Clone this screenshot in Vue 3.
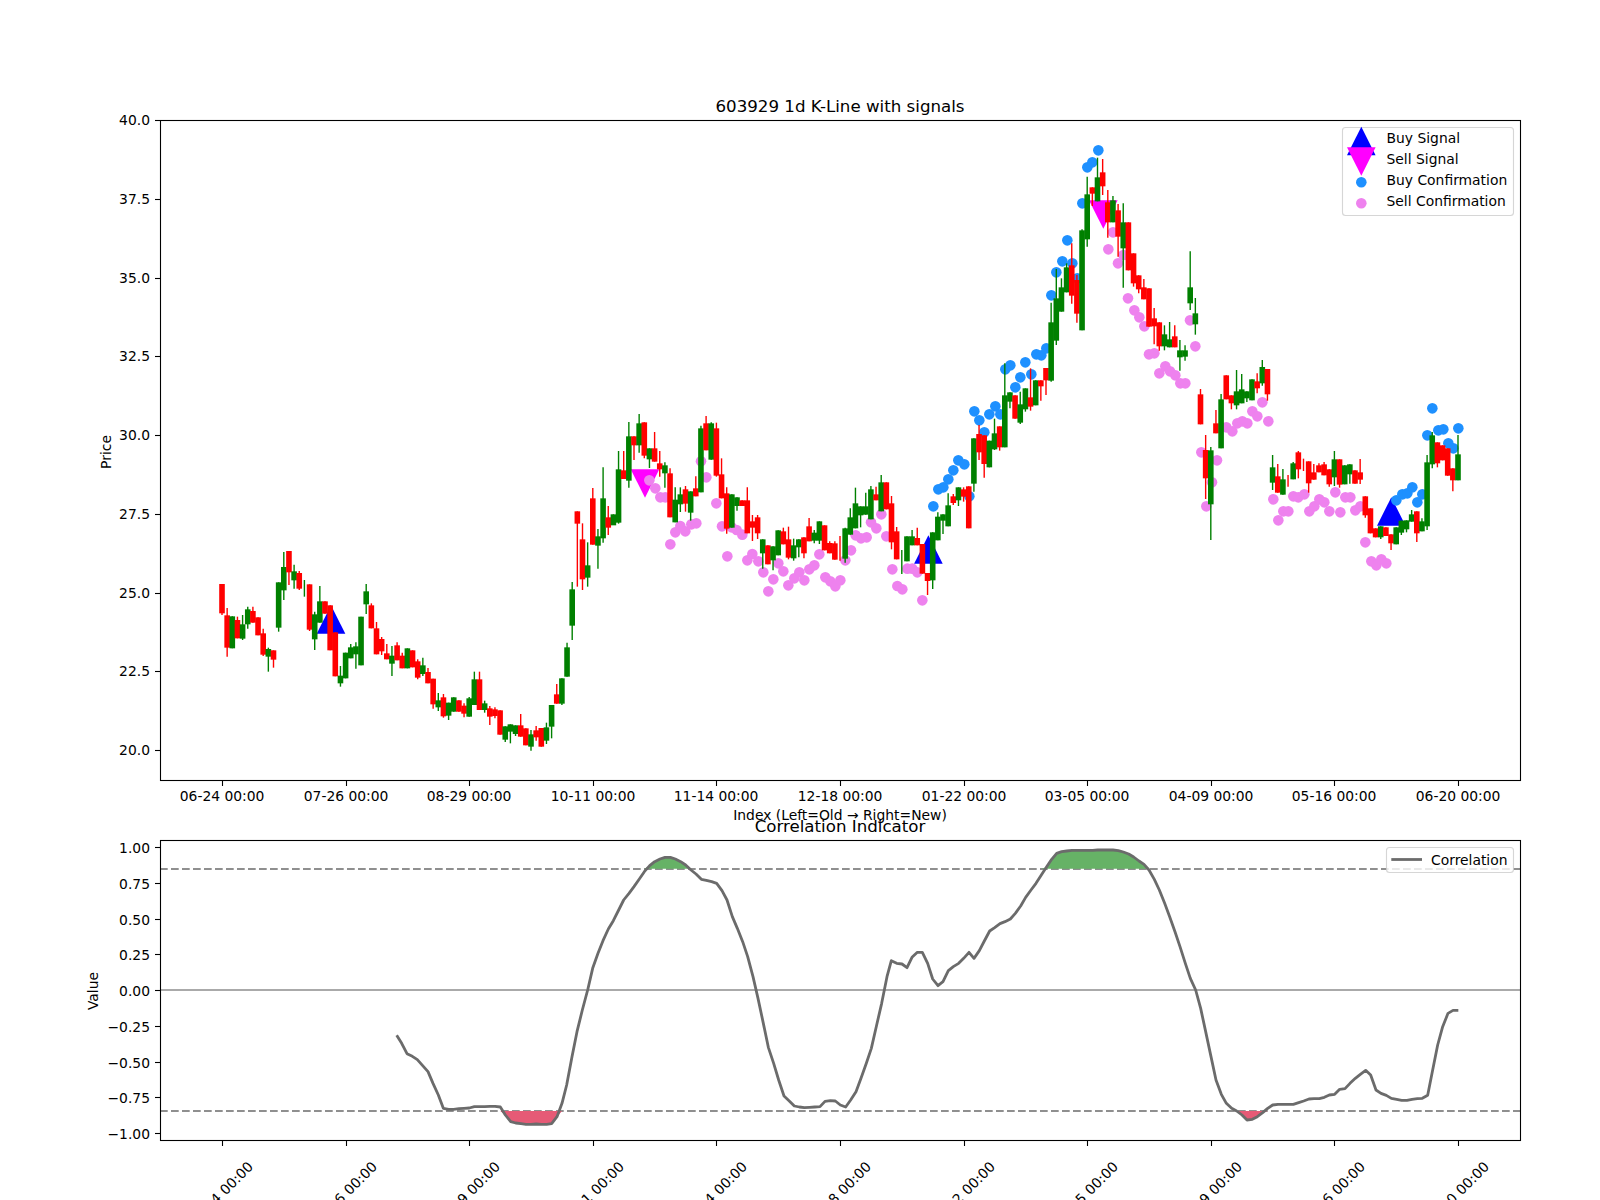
<template>
  <div class="page">
    <svg class="chart" width="1600" height="1200" viewBox="0 0 1600 1200">
      <!-- top panel -->
      <text class="title" x="840" y="112">603929 1d K-Line with signals</text>

      <polygon v-for="(t, i) in buySignals" :key="'b' + i" :points="triangle(t[0], t[1], 1)" fill="#0000ff" />
      <polygon v-for="(t, i) in sellSignals" :key="'s' + i" :points="triangle(t[0], t[1], -1)" fill="#ff00ff" />

      <circle v-for="(d, i) in sellDots" :key="'sd' + i" :cx="d[0]" :cy="d[1]" r="5.3" fill="#ee82ee" />
      <circle v-for="(d, i) in buyDots" :key="'bd' + i" :cx="d[0]" :cy="d[1]" r="5.3" fill="#1e90ff" />

      <g v-for="c in candles" :key="c.x" :fill="c.color" :stroke="c.color">
        <line :x1="c.x" :x2="c.x" :y1="c.hi" :y2="c.lo" stroke-width="1.4" />
        <rect :x="c.x - 2.8" :y="c.top" width="5.6" :height="c.h" stroke="none" />
      </g>

      <rect class="frame" x="160.5" y="120.5" width="1360" height="660" />
      <g v-for="(t, i) in xTicks" :key="'xt' + i">
        <line class="tick" :x1="t.x" :x2="t.x" y1="781" y2="786" />
        <text class="label mid" :x="t.x - 0.4" y="801">{{ t.label }}</text>
        <line class="tick" :x1="t.x" :x2="t.x" y1="1141" y2="1146" />
        <text class="label mid" :x="t.x - 2" y="1199" :transform="`rotate(-45 ${t.x - 2} 1194)`">{{ t.label }}</text>
      </g>
      <g v-for="t in priceTicks" :key="t.label">
        <line class="tick" x1="155" x2="160" :y1="t.y" :y2="t.y" />
        <text class="label end" x="150" :y="t.y + 4.9">{{ t.label }}</text>
      </g>
      <text class="label mid" transform="translate(111 452) rotate(-90)">Price</text>
      <text class="label mid" x="840" y="820">Index (Left=Old → Right=New)</text>

      <!-- legend -->
      <rect class="legend" x="1342.5" y="127.5" width="171" height="88" rx="3" />
      <polygon :points="triangle(1361.3, 141, 1)" fill="#0000ff" />
      <polygon :points="triangle(1361.3, 161.5, -1)" fill="#ff00ff" />
      <circle cx="1361.3" cy="182.3" r="5.3" fill="#1e90ff" />
      <circle cx="1361.3" cy="203.3" r="5.3" fill="#ee82ee" />
      <text class="label" x="1386.5" y="143">Buy Signal</text>
      <text class="label" x="1386.5" y="164">Sell Signal</text>
      <text class="label" x="1386.5" y="185">Buy Confirmation</text>
      <text class="label" x="1386.5" y="206">Sell Confirmation</text>

      <!-- bottom panel -->
      <text class="title" x="840" y="832">Correlation Indicator</text>

      <line class="zero" x1="160" x2="1520" y1="990" y2="990" />
      <line class="limit" x1="160" x2="1520" y1="869" y2="869" />
      <line class="limit" x1="160" x2="1520" y1="1111" y2="1111" />
      <path :d="upperFill" fill="#66b266" />
      <path :d="lowerFill" fill="#e65a76" />
      <polyline class="corr" :points="corrLine" />

      <rect class="frame" x="160.5" y="840.5" width="1360" height="300" />
      <g v-for="t in corrTicks" :key="t.label">
        <line class="tick" x1="155" x2="160" :y1="t.y" :y2="t.y" />
        <text class="label end" x="150" :y="t.y + 5.3">{{ t.label }}</text>
      </g>
      <text class="label mid" transform="translate(98 991) rotate(-90)">Value</text>

      <rect class="legend" x="1386.5" y="847.5" width="127" height="25" rx="3" />
      <line class="corr" x1="1391.3" x2="1422" y1="859.5" y2="859.5" />
      <text class="label" x="1431" y="864.5">Correlation</text>
    </svg>
  </div>
</template>

<script setup>
// pixel readings from the plot, grouped by the crop they were read in (z = 3x)
const X0 = 222
const STEP = 5.15

// [green?, bodyTop, bodyBottom, wickTop, wickBottom]
const group = (oy, rows) => rows.map(r => ({
  up: r[0],
  top: oy + r[1] / 3,
  bot: oy + r[2] / 3,
  hi: oy + (r[3] ?? r[1]) / 3,
  lo: oy + (r[4] ?? r[2]) / 3
}))

const rows = [
  ...group(400, [
    [0,552,640,552,645],[0,646,743,624,770],[1,649,745],[0,660,715,650],[1,673,716,645,720],
    [1,628,673,620,686],[0,633,668,620],[0,652,706],[0,700,764,686,768],[1,747,770,743,815],
    [0,751,779,751,803],[1,547,683,547,695],[1,501,571,456,600],[0,453,517,453,555],[1,514,541,494,566],
    [0,519,566,513,570],[1,565,565,540,590],[0,553,689,553,693],[1,643,718,635,750],[1,604,668,558],
    [0,604,641],[0,616,751],[0,697,829],[1,827,850,798,860],[1,758,835],
    [1,742,775,732],[1,739,763,727,806],[1,650,796],[1,574,613,552,642],[0,616,685,610],
    [0,685,763,666],[0,717,754,711,765],[0,760,778,732],[1,767,791,738,828],[0,736,781,727],
    [0,767,805,758],[1,745,805],[0,751,802],[0,784,833,778,838],[1,796,822,773,828],
    [0,816,850,804],[0,836,913,836,926],[1,901,922,879,933],[0,892,949,882,953],[1,908,947,908,960],
    [1,892,935],[0,901,935],[0,917,941,910,952],[1,895,950,891],[1,838,915,815]
  ]),
  ...group(480, [
    [0,598,690,575],[1,670,690,662,698],[0,685,710,678,735],[0,688,708,682,715],[0,691,764],
    [1,739,779,739,786],[1,733,755,733,790],[1,736,762,736,768],[0,736,770,702],[0,745,796],
    [1,763,800,750,812],[0,751,772,738,782],[0,744,800],[1,742,782,728,792],[1,675,740,675,775],
    [0,643,671,612],[1,595,671,595,675],[1,502,590,488]
  ]),
  ...group(380, [
    [1,628,737,606,780],[0,394,431,394,620],[0,478,598,430,630],[1,556,593,487,620],[0,355,494,324],
    [1,469,497,447,566],[1,355,475,262,488],[0,412,443,378,465],[1,403,436,403,431],[1,268,428,213,431],
    [0,271,297,213],[1,169,302,126,323],[0,169,196,169,240],[1,130,196,102,218],[0,127,227,127,235],
    [1,205,238,205,264],[0,205,245,156],[0,250,268,213,290],[1,256,280,247,323],[0,280,412,265],
    [1,359,427,322],[1,343,373,322,396],[0,328,371,318,395],[1,334,398,334,422],[0,325,349,289],
    [1,145,337,137],[0,130,211,108],[1,130,239,127],[0,145,287,128,290],[0,283,355,235],
    [0,340,446,322,461],[1,343,443],[1,352,378,352,392],[0,361,378],[0,361,460,322],
    [0,424,443,405,483],[0,412,460,405,477],[1,478,520,478,566],[0,496,553],[1,499,541,499,571],
    [1,451,526],[0,454,493,443],[0,478,533,440,538],[1,496,535,476,542],[1,478,502,478,532],
    [0,472,520,472,535],[0,439,484,414],[1,458,482,450,490],[1,424,482,424,492],[0,436,511],
    [0,489,520,484],[0,490,539,484],[0,500,500,468,542],[1,445,536,443,548],[1,412,464,385],
    [1,370,445,323],[1,379,406,379,442],[1,379,404,338],[1,328,418,318],[0,343,361,320],
    [1,307,394,285],[0,307,388],[0,370,487,348,508],[0,454,538,441]
  ]),
  ...group(130, [
    [1,1295,1295,1260,1332],[1,1219,1294],[1,1219,1246,1200],[0,1224,1246,1193],[0,1242,1331],
    [0,1329,1353,1329,1395],[1,1207,1351,1207,1377],[1,1160,1231,1147],[1,1153,1172,1153,1212],[1,1126,1189,1090],
    [0,1099,1119,1092,1125],[1,1072,1111,1072,1128],[0,1078,1100,1072,1115],[0,1069,1195],[1,925,1061,925,1085],
    [0,912,967,885,990],[0,916,1002,916,1043],[1,932,1012],[1,910,958,866,960],[0,889,952,889,962],
    [1,796,952,700],[1,787,815,787,835],[0,796,866],[1,823,878,785,882],[1,775,838,775,845],
    [0,802,830,715,842],[1,751,826],[0,751,769,751,812],[0,714,751,714,795],[1,577,752,518,755],
    [1,505,632,417,645],[1,472,545,445],[1,412,487,400],[0,406,497,340,521],[0,450,551,435,578],
    [1,301,601,298],[1,193,328,140,350],[0,172,191,172,228],[1,142,214,83],[0,127,169,87,195],
    [0,217,277,180,323],[1,211,277,198],[0,241,320,222,380],[1,277,355,220,473],[0,277,421],
    [0,370,460,370,470],[0,436,478,436,490],[0,472,508,447],[0,475,590],[0,565,589,534,643],
    [0,577,649,577,662],[1,613,649,586,661],[1,628,652,576],[0,619,652,586],[1,661,682,630,722],
    [1,661,680,646,692],[1,472,520,364,540],[1,550,583,504,614]
  ]),
  ...group(370, [
    [0,73,163,57],[0,240,325,195,387],[1,241,403,231,510],[0,160,190,120],[1,88,235,72],
    [0,16,88],[0,76,100,76,118],[1,64,106,0,118],[1,58,100,12],[1,64,85,64,96],
    [1,28,91],[0,34,55,10,70],[1,-9,40,-30,47],[0,-3,73,-3,92],[1,292,338,255,360],
    [0,319,368,282],[1,328,374,297],[0,332,332,315,350],[1,280,328,276],[0,247,298,243,325],
    [0,285,285,266,303],[0,274,340,274,368],[0,307,329,282],[0,286,307,280],[0,283,316,276],
    [0,298,343,298,350],[1,268,322,243,348],[0,268,344,268,353],[1,286,343],[1,283,313,283,341],
    [0,301,341],[0,307,329,267,342],[0,379,436,379,443],[0,415,490],[0,475,502],
    [1,469,502,469,507],[0,472,498],[0,493,520,493,540],[1,472,523],[1,452,488,452,495],
    [1,451,478,451,487],[1,433,455,420],[0,424,490,424,516],[1,454,484,445],[1,277,469,255,480],
    [1,196,283,186,295],[0,217,280,217,292],[0,226,271],[0,235,317],[0,295,331,295,364],
    [1,253,331,195]
  ])
]

const candles = rows.map((r, i) => ({
  x: X0 + STEP * i,
  color: r.up ? '#008000' : '#ff0000',
  top: r.top,
  h: r.bot - r.top,
  hi: r.hi,
  lo: r.lo
}))

const crop = (ox, oy, pts) => pts.map(([x, y]) => [ox + x / 3, oy + y / 3])

const sellDots = [
  ...crop(550, 380, [
    [453,244],[469,292],[499,370],[516,439],[545,442],[560,450],[577,464],[532,529],[361,493],[376,457],
    [391,438],[406,454],[424,433],[439,430],[298,301],[316,325],[331,352],[346,352],[592,541],[607,522],
    [625,544],[640,577],[655,634],[670,598],[685,550],[700,574],[715,616],[733,595],[748,577],[763,601],
    [778,568],[793,556],[808,523],[826,592],[841,604],[856,619],[871,601],[886,541],[903,511],[917,466],
    [933,475],[950,472],[963,427],[979,445],[994,403],[1009,469],[1027,568],[1042,618],[1057,628],[1072,566],
    [1087,566],[1102,577],[1117,661]
  ]),
  ...crop(900, 130, [
    [639,307],[625,358],[654,400],[670,375],[684,505],[703,541],[718,562],[733,589],[747,673],[763,670],
    [778,730],[796,709],[810,724],[826,736],[841,760],[856,760],[870,571],[886,649]
  ]),
  ...crop(1180, 370, [
    [64,247],[79,409],[96,337],[111,271],[139,172],[157,184],[172,160],[187,154],[202,160],[217,124],
    [232,139],[247,97],[265,154],[280,388],[295,451],[310,424],[325,424],[340,379],[355,382],[373,373],
    [388,424],[403,409],[418,388],[433,397],[448,424],[466,367],[481,427],[496,382],[511,382],[526,421],
    [541,409],[556,517],[574,574],[589,586],[604,568],[619,580]
  ])
]

const buyDots = [
  ...crop(900, 130, [
    [100,1129],[115,1078],[130,1072],[145,1048],[160,1021],[175,991],[193,1003],[208,1099],[223,844],[238,871],
    [253,907],[268,853],[286,829],[301,853],[316,718],[331,706],[346,772],[361,742],[376,697],[394,733],
    [409,673],[424,676],[439,655],[454,496],[469,427],[487,394],[502,331],[517,400],[532,445],[547,220],
    [562,112],[577,97],[595,61]
  ]),
  ...crop(1180, 370, [
    [649,391],[667,373],[682,370],[697,352],[712,397],[727,373],[742,196],[757,115],[775,181],[790,178],
    [805,220],[820,235],[835,175]
  ])
]

// x centre and y of the middle of each marker
const buySignals = [[331, 619.5], [928.4, 549.5], [1391.3, 511.5]]
const sellSignals = [[645, 483.5], [1103.3, 214.5]]

const triangle = (x, y, dir) => {
  const h = 14.3 * dir
  return `${x},${y - h} ${x - 14.3},${y + h} ${x + 14.3},${y + h}`
}

const xLabels = ['06-24', '07-26', '08-29', '10-11', '11-14', '12-18', '01-22', '03-05', '04-09', '05-16', '06-20']
const xTicks = xLabels.map((d, i) => ({ x: Math.round(X0 + 123.6 * i) + 0.5, label: d + ' 00:00' }))

const priceTicks = ['40.0', '37.5', '35.0', '32.5', '30.0', '27.5', '25.0', '22.5', '20.0'].map((label, i) => ({
  label,
  y: Math.round(120.3 + 78.7 * i) + 0.5
}))

const corrTicks = ['1.00', '0.75', '0.50', '0.25', '0.00', '−0.25', '−0.50', '−0.75', '−1.00'].map((label, i) => ({
  label,
  y: Math.round(847.3 + 35.7 * i) + 0.5
}))

const corrPts = [
  ...crop(80, 760, [
    [950,826],[965,850],[981,881],[997,889],[1012,899],[1028,917],[1044,935],[1059,970],[1075,1005],[1090,1045],
    [1106,1048],[1121,1048],[1137,1046],[1152,1045],[1168,1044],[1183,1040],[1199,1040],[1214,1040],[1230,1039],[1245,1039],
    [1261,1041],[1276,1065],[1292,1085],[1307,1089],[1323,1091],[1338,1093],[1353,1093],[1369,1092],[1384,1093],[1400,1093],
    [1415,1091],[1431,1070],[1446,1030]
  ]),
  ...crop(560, 760, [
    [20,975],[36,890],[51,815],[67,750],[83,690],[98,625],[114,580],[129,542],[145,507],[160,482],
    [176,450],[191,420],[207,400],[222,380],[238,357],[253,335],[269,317],[284,305],[300,297],[315,292],
    [331,292],[346,297],[362,305],[377,315],[393,330],[408,342],[424,358],[439,361],[455,365],[470,370],
    [486,392],[501,420],[517,470],[532,505],[548,545],[563,590],[579,650],[594,715],[610,790],[625,862],
    [641,910],[656,960],[672,1008],[687,1022],[703,1038],[718,1041],[733,1043],[749,1042],[764,1041],[780,1040],
    [795,1024],[811,1022],[826,1023],[841,1035],[857,1041],[872,1020],[888,995],[903,955],[919,910],[934,865],
    [950,795],[965,730],[981,650],[994,602],[1010,610],[1026,612],[1041,623],[1056,592],[1072,577],[1087,577],
    [1103,610],[1118,657],[1134,677],[1149,665],[1165,632],[1180,620],[1196,610],[1211,595],[1227,577],[1242,595],
    [1258,572],[1273,543],[1289,513],[1304,503],[1320,491],[1335,485],[1351,477],[1366,460],[1382,438],[1397,412],
    [1413,390],[1428,370],[1444,345],[1459,322],[1475,298],[1490,280]
  ]),
  ...crop(1040, 760, [
    [65,275],[80,273],[96,271],[111,271],[127,271],[142,271],[158,271],[173,270],[188,270],[204,270],
    [219,270],[235,272],[250,276],[266,282],[281,291],[297,303],[312,313],[327,330],[343,358],[358,390],
    [374,430],[389,470],[405,515],[420,560],[436,610],[451,655],[467,690],[482,745],[497,815],[513,890],
    [528,960],[544,1003],[559,1030],[575,1045],[590,1053],[606,1065],[621,1080],[637,1078],[652,1070],[668,1058],
    [683,1045],[698,1035],[714,1033],[729,1033],[745,1033],[760,1033],[776,1028],[791,1023],[807,1017],[822,1016],
    [838,1016],[853,1012],[868,1005],[884,1003],[899,988],[915,986],[930,970],[946,955],[961,943],[977,931],
    [992,945],[1008,990],[1023,1000],[1039,1006],[1054,1015],[1070,1018],[1085,1021],[1101,1021],[1116,1018],[1132,1016],
    [1147,1015],[1163,1006],[1178,930],[1193,855],[1208,800],[1224,760],[1239,751],[1255,751]
  ])
]

const corrLine = corrPts.map(p => p.join(',')).join(' ')

// area between the line and a threshold: clamp the line to the threshold on the other side
const areaPath = (clamp, level) => {
  const pts = corrPts.map(([x, y]) => [x, clamp(y, level)])
  const first = pts[0][0]
  const last = pts[pts.length - 1][0]
  return `M${first},${level} L` + pts.map(p => p.join(',')).join(' L') + ` L${last},${level} Z`
}
const upperFill = areaPath(Math.min, 868.7)
const lowerFill = areaPath(Math.max, 1111)
</script>

<style scoped>
.page {
  width: 1600px;
  height: 1200px;
  background: #fff;
}

.chart {
  display: block;
  font-family: "DejaVu Sans", sans-serif;
}

.title {
  font-size: 16.67px;
  text-anchor: middle;
  fill: #000;
}

.label {
  font-size: 13.89px;
  fill: #000;
}

.mid {
  text-anchor: middle;
}

.end {
  text-anchor: end;
}

.frame {
  fill: none;
  stroke: #000;
  stroke-width: 1.1;
}

.tick {
  stroke: #000;
  stroke-width: 1.1;
}

.legend {
  fill: rgba(255, 255, 255, 0.8);
  stroke: rgba(204, 204, 204, 0.8);
  stroke-width: 1.1;
}

.zero {
  stroke: #aaaaaa;
  stroke-width: 2;
}

.limit {
  stroke: #8f8f8f;
  stroke-width: 2;
  stroke-dasharray: 7.7 3.3;
}

.corr {
  fill: none;
  stroke: #6b6b6b;
  stroke-width: 2.8;
  stroke-linejoin: round;
}
</style>

<style>
html,
body {
  margin: 0;
  background: #fff;
}
</style>
